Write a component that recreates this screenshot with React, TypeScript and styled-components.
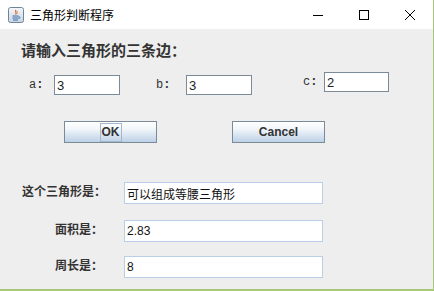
import React from 'react';
import styled, { createGlobalStyle } from 'styled-components';

const GlobalStyle = createGlobalStyle`
  html, body {
    margin: 0;
    padding: 0;
    background: #eeeeee;
  }
  * {
    box-sizing: border-box;
  }
`;

const cjk = `"Noto Sans CJK SC", "Noto Sans", sans-serif`;

const Frame = styled.div`
  width: 434px;
  height: 291px;
  display: flex;
  flex-direction: column;
  background: #eeeeee;
  border-right: 1px solid #a6c878;
  border-bottom: 2px solid #a6c878;
  overflow: hidden;
`;

const TitleBar = styled.div`
  height: 29px;
  flex: none;
  display: flex;
  align-items: center;
  background: #ffffff;
  padding-left: 8px;
`;

const Title = styled.span`
  margin-left: 6px;
  font-family: ${cjk};
  font-size: 12px;
  color: #000;
  flex: 1;
`;

const WinButton = styled.div`
  width: 46px;
  height: 29px;
  display: flex;
  align-items: center;
  justify-content: center;
`;

const Content = styled.div`
  padding: 11px 0 0 0;
  display: flex;
  flex-direction: column;
`;

const Heading = styled.div`
  padding-left: 21px;
  height: 20px;
  line-height: 20px;
  font-family: ${cjk};
  font-size: 15px;
  font-weight: 700;
  color: #333333;
`;

const SideRow = styled.div`
  margin-top: 15px;
  padding-left: 29px;
  display: flex;
  align-items: flex-start;
  height: 20px;
`;

const Field = styled.div<{ $width?: number; $lift?: number }>`
  width: ${p => (p.$width ? `${p.$width}px` : 'auto')};
  display: flex;
  align-items: center;
  margin-top: ${p => -(p.$lift || 0)}px;
`;

const SideLabel = styled.span<{ $width: number }>`
  width: ${p => p.$width}px;
  font-family: "Liberation Mono", "DejaVu Sans Mono", monospace;
  font-size: 12px;
  color: #333333;
  white-space: pre;
  b {
    font-weight: 700;
  }
`;

const SideInput = styled.input<{ $width?: number }>`
  width: ${p => p.$width || 66}px;
  height: 20px;
  border: 1px solid #7a8a99;
  background: #ffffff;
  padding: 0 2px;
  font-family: "Liberation Sans", Arial, sans-serif;
  font-size: 13px;
  color: #222;
  outline: none;
`;

const ButtonRow = styled.div`
  margin-top: 26px;
  padding-left: 64px;
  display: flex;
  gap: 75px;
`;

const Button = styled.button`
  width: 93px;
  height: 22px;
  padding: 0;
  border: 1px solid #7a8a99;
  background: linear-gradient(to bottom, #ffffff 0%, #f2f6fa 35%, #dde8f3 60%, #bdd1e6 100%);
  font-family: "Liberation Sans", Arial, sans-serif;
  font-size: 12px;
  font-weight: 700;
  color: #333333;
  display: flex;
  align-items: center;
  justify-content: center;
`;

const Focus = styled.span`
  display: inline-flex;
  align-items: center;
  justify-content: center;
  height: 19px;
  padding: 0 1px;
  border: 1px solid #a3b8cc;
`;

const Results = styled.div`
  margin-top: 39px;
  padding-left: 22px;
  display: flex;
  flex-direction: column;
`;

const ResultRow = styled.div<{ $top?: number }>`
  display: flex;
  align-items: flex-start;
  margin-top: ${p => p.$top || 0}px;
`;

const ResultLabel = styled.span<{ $indent?: number }>`
  width: 102px;
  padding-left: ${p => p.$indent || 0}px;
  padding-top: 1px;
  line-height: 16px;
  font-family: ${cjk};
  font-size: 12px;
  font-weight: 700;
  color: #333333;
`;

const ResultInput = styled.input`
  width: 199px;
  height: 22px;
  border: 1px solid #b8cfe5;
  background: #ffffff;
  padding: 0 2px;
  font-family: "Liberation Sans", ${cjk};
  font-size: 12px;
  color: #111;
  outline: none;
`;

const JavaIcon = () => (
  <svg width="16" height="16" viewBox="0 0 16 16">
    <defs>
      <linearGradient id="jg" x1="0" y1="0" x2="0" y2="1">
        <stop offset="0" stopColor="#f4f7fa" />
        <stop offset="1" stopColor="#c9d5e2" />
      </linearGradient>
    </defs>
    <rect x="0.5" y="0.5" width="15" height="15" rx="2" fill="url(#jg)" stroke="#6f849b" />
    <path d="M8 3 C6.5 4.5 9.5 5.5 7.5 7.5" stroke="#e0602a" strokeWidth="1.2" fill="none" />
    <path d="M9.5 4 C8.5 5 10 6 9 7" stroke="#f08a3a" strokeWidth="0.9" fill="none" />
    <path d="M4.5 9 H10.5 M4.5 11 H10.5 M5 13 H10" stroke="#3c6ea8" strokeWidth="1" />
    <path d="M10.5 9.5 C12.5 9.5 12.5 11.5 10.5 11.5" stroke="#3c6ea8" strokeWidth="0.9" fill="none" />
  </svg>
);

const MinIcon = () => (
  <svg width="10" height="10" viewBox="0 0 10 10">
    <path d="M0 5.5 H10" stroke="#000" strokeWidth="1" />
  </svg>
);

const MaxIcon = () => (
  <svg width="10" height="10" viewBox="0 0 10 10">
    <rect x="0.5" y="0.5" width="9" height="9" fill="none" stroke="#000" strokeWidth="1" />
  </svg>
);

const CloseIcon = () => (
  <svg width="10" height="10" viewBox="0 0 10 10">
    <path d="M0 0 L10 10 M10 0 L0 10" stroke="#000" strokeWidth="1" />
  </svg>
);

export default function App() {
  return (
    <>
      <GlobalStyle />
      <Frame>
        <TitleBar>
          <JavaIcon />
          <Title>三角形判断程序</Title>
          <WinButton><MinIcon /></WinButton>
          <WinButton><MaxIcon /></WinButton>
          <WinButton><CloseIcon /></WinButton>
        </TitleBar>
        <Content>
          <Heading>请输入三角形的三条边：</Heading>
          <SideRow>
            <Field $width={127}>
              <SideLabel $width={25}>a<b>:</b></SideLabel>
              <SideInput defaultValue="3" />
            </Field>
            <Field $width={147}>
              <SideLabel $width={30}>b<b>:</b></SideLabel>
              <SideInput defaultValue="3" />
            </Field>
            <Field $lift={3}>
              <SideLabel $width={21}>c<b>:</b></SideLabel>
              <SideInput defaultValue="2" $width={65} />
            </Field>
          </SideRow>
          <ButtonRow>
            <Button><Focus>OK</Focus></Button>
            <Button>Cancel</Button>
          </ButtonRow>
          <Results>
            <ResultRow>
              <ResultLabel>这个三角形是：</ResultLabel>
              <ResultInput defaultValue="可以组成等腰三角形" />
            </ResultRow>
            <ResultRow $top={16}>
              <ResultLabel $indent={33}>面积是：</ResultLabel>
              <ResultInput defaultValue="2.83" />
            </ResultRow>
            <ResultRow $top={14}>
              <ResultLabel $indent={33}>周长是：</ResultLabel>
              <ResultInput defaultValue="8" />
            </ResultRow>
          </Results>
        </Content>
      </Frame>
    </>
  );
}
